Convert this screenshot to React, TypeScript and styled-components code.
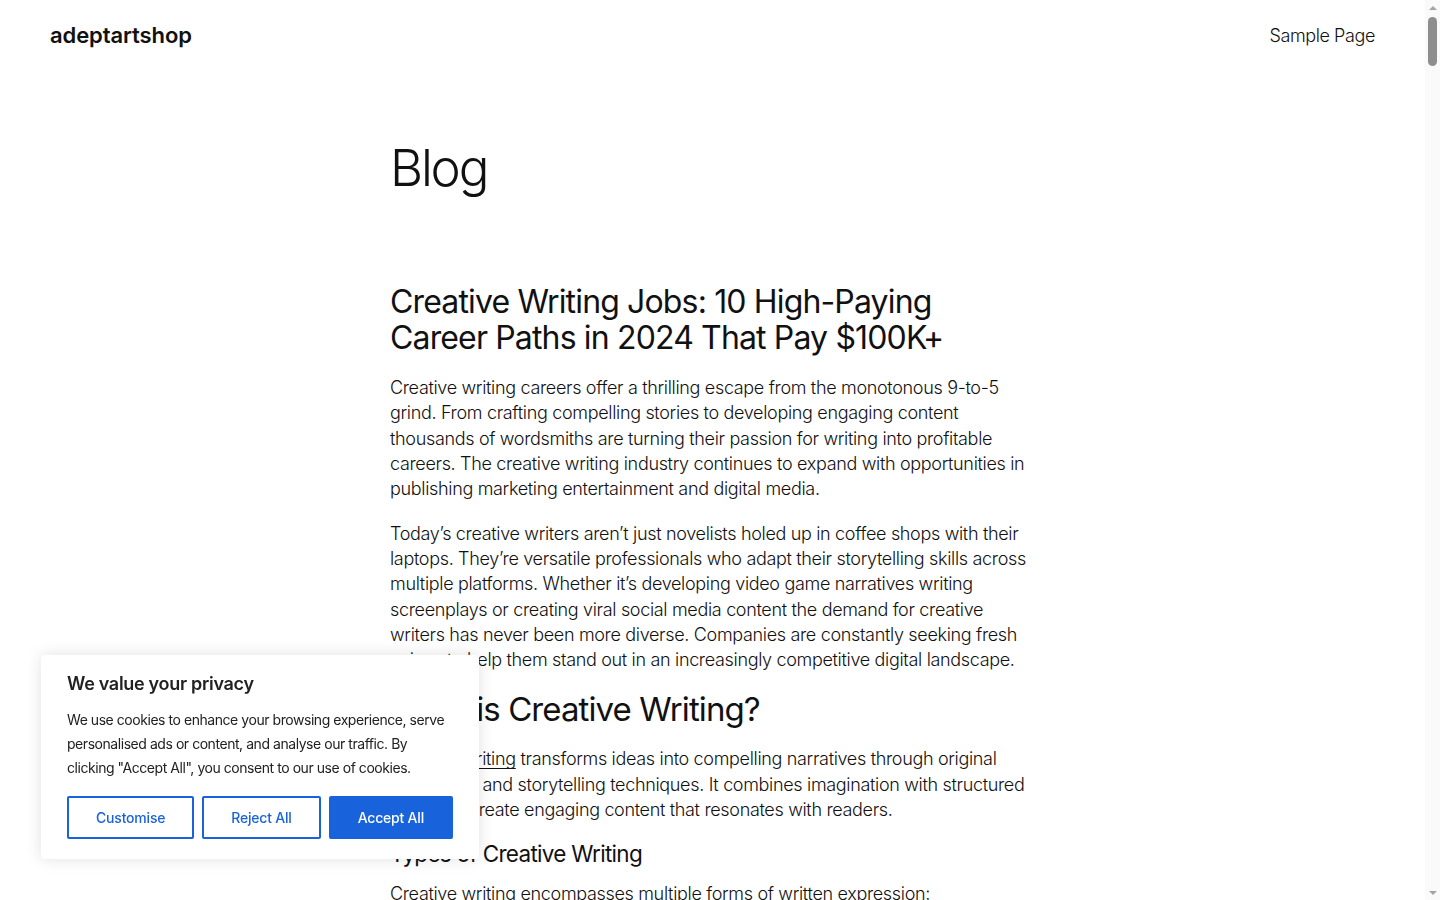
import * as React from 'react'
import styled, { createGlobalStyle } from 'styled-components'

const GlobalStyle = createGlobalStyle`
  html, body {
    margin: 0;
    padding: 0;
    background: #ffffff;
    overflow: hidden;
  }
  body {
    font-family: Inter, "Noto Sans", sans-serif;
    color: #111111;
    -webkit-font-smoothing: antialiased;
  }
  * {
    box-sizing: border-box;
  }
`

const Layout = styled.div`
  display: flex;
  height: 100vh;
`

const Page = styled.div`
  flex: 1;
  min-width: 0;
  overflow: hidden;
`

/* classic scrollbar rail on the right edge */
const ScrollRail = styled.div`
  flex: none;
  width: 15px;
  display: flex;
  flex-direction: column;
  background: #fafafa;
`

const RailArrow = styled.div<{ $down?: boolean }>`
  height: 15px;
  display: flex;
  align-items: center;
  justify-content: center;

  &::before {
    content: '';
    border-left: 4px solid transparent;
    border-right: 4px solid transparent;
    ${({ $down }) => ($down ? 'border-top: 4px solid #a3a3a3;' : 'border-bottom: 4px solid #a3a3a3;')}
  }
`

const RailTrack = styled.div`
  flex: 1;
  padding: 2px 3px;
`

const RailThumb = styled.div`
  height: 49px;
  border-radius: 5px;
  background: #8e8e8e;
`

const SiteHeader = styled.header`
  display: flex;
  align-items: center;
  justify-content: space-between;
  height: 70px;
  padding: 0 50px;
`

const SiteTitle = styled.a`
  font-size: 22px;
  font-weight: 600;
  letter-spacing: -0.1px;
  color: #111111;
  text-decoration: none;
`

const NavLink = styled.a`
  font-size: 18px;
  font-weight: 300;
  color: #111111;
  text-decoration: none;
  letter-spacing: -0.4px;
`

const Main = styled.main`
  max-width: 645px;
  margin: 0 auto;
`

const PageTitle = styled.h1`
  margin: 67px 0 0;
  font-size: 51px;
  font-weight: 300;
  line-height: 1.2;
  letter-spacing: -2.2px;
`

const PostTitle = styled.h2`
  margin: 86px 0 0;
  font-size: 32px;
  font-weight: 400;
  line-height: 36px;
  letter-spacing: -0.85px;
`

const Paragraph = styled.p<{ $gap?: number }>`
  margin: ${({ $gap }) => $gap ?? 19}px 0 0;
  font-size: 18px;
  font-weight: 300;
  line-height: 25.3px;
  letter-spacing: -0.33px;
`

const SectionHeading = styled.h2`
  margin: 17px 0 0;
  font-size: 33px;
  font-weight: 400;
  line-height: 41px;
  letter-spacing: -0.9px;
`

const SubHeading = styled.h3`
  margin: 18px 0 0;
  font-size: 22.5px;
  font-weight: 400;
  line-height: 28px;
  letter-spacing: -0.7px;
`

const InlineLink = styled.a`
  color: inherit;
  text-decoration: underline;
  text-underline-offset: 3px;
  text-decoration-thickness: 1px;
`

const ConsentBar = styled.div`
  position: fixed;
  left: 41px;
  bottom: 41px;
  width: 438px;
  padding: 18px 26px 20px;
  background: #ffffff;
  border-radius: 4px;
  box-shadow: 0 0 16px rgba(0, 0, 0, 0.12);
  color: #212121;
  z-index: 10;
`

const ConsentTitle = styled.p`
  margin: 0 0 13px;
  font-size: 18px;
  font-weight: 600;
  line-height: 22px;
  letter-spacing: -0.3px;
`

const ConsentText = styled.p`
  margin: 0 0 16px;
  font-size: 14px;
  font-weight: 400;
  line-height: 24px;
  letter-spacing: -0.45px;
`

const ButtonRow = styled.div`
  display: flex;
  gap: 8px;
`

const ConsentButton = styled.button<{ $filled?: boolean }>`
  flex: 1 1 auto;
  height: 43px;
  padding: 0 20px;
  font-family: inherit;
  font-size: 14px;
  font-weight: 500;
  letter-spacing: -0.2px;
  border: 2px solid #1863dc;
  border-radius: 2px;
  background: ${({ $filled }) => ($filled ? '#1863dc' : '#ffffff')};
  color: ${({ $filled }) => ($filled ? '#ffffff' : '#1863dc')};
  cursor: pointer;
`

export default function App() {
  return (
    <Layout>
      <GlobalStyle />
      <Page>
        <SiteHeader>
          <SiteTitle href="#">adeptartshop</SiteTitle>
          <NavLink href="#">Sample Page</NavLink>
        </SiteHeader>
        <Main>
          <PageTitle>Blog</PageTitle>
          <PostTitle>Creative Writing Jobs: 10 High-Paying Career Paths in 2024 That Pay $100K+</PostTitle>
          <Paragraph>
            Creative writing careers offer a thrilling escape from the monotonous 9-to-5 grind. From crafting
            compelling stories to developing engaging content thousands of wordsmiths are turning their passion for
            writing into profitable careers. The creative writing industry continues to expand with opportunities in
            publishing marketing entertainment and digital media.
          </Paragraph>
          <Paragraph>
            Today’s creative writers aren’t just novelists holed up in coffee shops with their laptops. They’re
            versatile professionals who adapt their storytelling skills across multiple platforms. Whether it’s
            developing video game narratives writing screenplays or creating viral social media content the demand
            for creative writers has never been more diverse. Companies are constantly seeking fresh voices to help
            them stand out in an increasingly competitive digital landscape.
          </Paragraph>
          <SectionHeading>What is Creative Writing?</SectionHeading>
          <Paragraph $gap={16}>
            <InlineLink href="#">Creative writing</InlineLink> transforms ideas into compelling narratives through
            original expression and storytelling techniques. It combines imagination with structured writing to
            create engaging content that resonates with readers.
          </Paragraph>
          <SubHeading>Types of Creative Writing</SubHeading>
          <Paragraph $gap={13}>Creative writing encompasses multiple forms of written expression:</Paragraph>
        </Main>
      </Page>
      <ScrollRail>
        <RailArrow />
        <RailTrack>
          <RailThumb />
        </RailTrack>
        <RailArrow $down />
      </ScrollRail>
      <ConsentBar>
        <ConsentTitle>We value your privacy</ConsentTitle>
        <ConsentText>
          We use cookies to enhance your browsing experience, serve personalised ads or content, and analyse our
          traffic. By clicking "Accept All", you consent to our use of cookies.
        </ConsentText>
        <ButtonRow>
          <ConsentButton>Customise</ConsentButton>
          <ConsentButton>Reject All</ConsentButton>
          <ConsentButton $filled>Accept All</ConsentButton>
        </ButtonRow>
      </ConsentBar>
    </Layout>
  )
}
